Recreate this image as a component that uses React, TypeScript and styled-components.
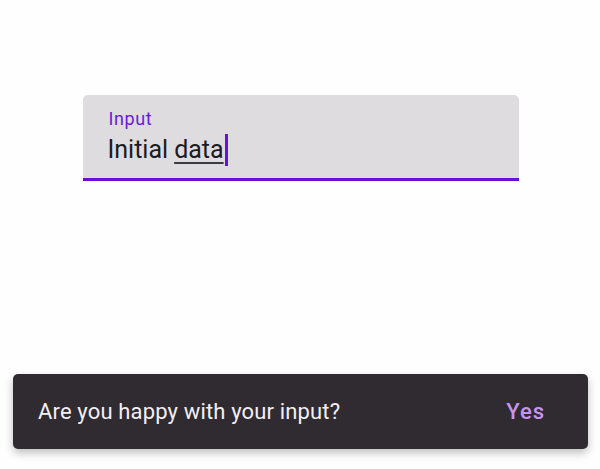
import styled, { createGlobalStyle } from 'styled-components';

const GlobalStyle = createGlobalStyle`
  html, body {
    margin: 0;
    padding: 0;
    background: #fefefe;
    font-family: Roboto, "Liberation Sans", sans-serif;
  }
`;

const Screen = styled.div`
  display: flex;
  flex-direction: column;
  height: 469px;
  box-sizing: border-box;
  padding: 95px 12px 20px 13px;
`;

const Field = styled.div`
  align-self: center;
  width: 436px;
  height: 86px;
  box-sizing: border-box;
  padding: 12px 25px 0;
  background: #dedcdf;
  border-radius: 5px 5px 0 0;
  border-bottom: 3px solid #6a0fd9;
  display: flex;
  flex-direction: column;
`;

const Label = styled.div`
  font-size: 18px;
  line-height: 23px;
  letter-spacing: 0.6px;
  color: #6a1ad6;
  padding-left: 1px;
`;

const Value = styled.div`
  display: flex;
  align-items: center;
  font-size: 25px;
  line-height: 34px;
  color: #1c1b1f;
  margin-top: 3px;
`;

const Composing = styled.span`
  text-decoration: underline;
  text-decoration-thickness: 2px;
  text-underline-offset: 4px;
  text-decoration-color: #3c3a3e;
  margin-left: 6px;
`;

const Caret = styled.span`
  width: 3px;
  height: 32px;
  background: #6a0fd9;
  margin-left: 1px;
`;

const Spacer = styled.div`
  flex: 1;
`;

const Snackbar = styled.div`
  height: 75px;
  display: flex;
  align-items: center;
  justify-content: space-between;
  padding: 0 43px 0 25px;
  background: #2f2b30;
  border-radius: 5px;
  box-shadow: 0 4px 8px rgba(0, 0, 0, 0.25);
`;

const Message = styled.span`
  font-size: 22px;
  letter-spacing: 0.15px;
  color: #f4eff4;
`;

const Action = styled.span`
  font-size: 22px;
  font-weight: 500;
  letter-spacing: 1px;
  color: #c596f0;
`;

export default function App() {
  return (
    <>
      <GlobalStyle />
      <Screen>
        <Field>
          <Label>Input</Label>
          <Value>
            <span>Initial</span>
            <Composing>data</Composing>
            <Caret />
          </Value>
        </Field>
        <Spacer />
        <Snackbar>
          <Message>Are you happy with your input?</Message>
          <Action>Yes</Action>
        </Snackbar>
      </Screen>
    </>
  );
}
